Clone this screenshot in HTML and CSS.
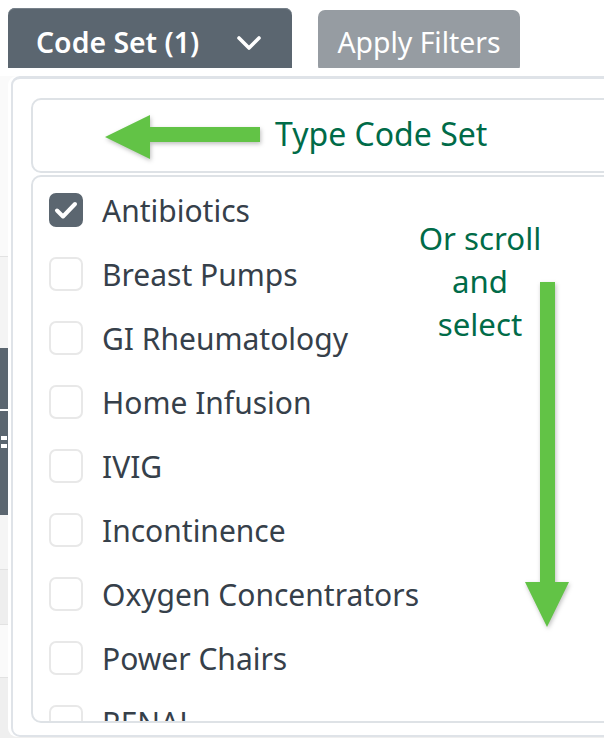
FILE: index.html
```html
<!DOCTYPE html>
<html>
<head>
<meta charset="utf-8">
<link rel="stylesheet" href="styles.css">
</head>
<body>
<div class="toolbar">
  <button class="btn btn-dark">Code Set (1)
    <svg class="chev" width="26" height="16" viewBox="0 0 26 16"><polyline points="3,3 13,13 23,3" fill="none" stroke="#fff" stroke-width="3.6" stroke-linecap="round" stroke-linejoin="round"/></svg>
  </button>
  <button class="btn btn-muted">Apply Filters</button>
</div>

<div class="table">
  <div class="trow r1"></div>
  <div class="trow r2"></div>
  <div class="trow r3"><span class="grip"></span></div>
  <div class="trow r4"></div>
  <div class="trow r5"></div>
  <div class="trow r6"></div>
  <div class="trow r7"></div>
</div>

<div class="menu">
  <div class="search">
    <svg class="left-arrow" width="162" height="52" viewBox="0 0 162 52"><polygon points="2,26 47,4 47,16 157,16 157,31 47,31 47,48" fill="#62c346"/></svg>
    <span class="hint">Type Code Set</span>
  </div>
  <div class="list">
    <label class="item"><span class="box checked"><svg width="34" height="34" viewBox="0 0 34 34"><polyline points="8,17.5 14,23.5 26,11" fill="none" stroke="#fff" stroke-width="4" stroke-linecap="round" stroke-linejoin="round"/></svg></span>Antibiotics</label>
    <label class="item"><span class="box"></span>Breast Pumps</label>
    <label class="item"><span class="box"></span>GI Rheumatology</label>
    <label class="item"><span class="box"></span>Home Infusion</label>
    <label class="item"><span class="box"></span>IVIG</label>
    <label class="item"><span class="box"></span>Incontinence</label>
    <label class="item"><span class="box"></span>Oxygen Concentrators</label>
    <label class="item"><span class="box"></span>Power Chairs</label>
    <label class="item"><span class="box"></span>RENAL</label>
  </div>
  <div class="scroll-note">Or scroll<br>and<br>select</div>
  <svg class="down-arrow" width="48" height="350" viewBox="0 0 48 350"><polygon points="17,2 32,2 32,302 46,302 24,347 2,302 17,302" fill="#62c346"/></svg>
</div>
</body>
</html>
```

FILE: styles.css
```css
html, body {
  margin: 0;
  padding: 0;
  overflow: hidden;
  background: #fff;
  width: 604px;
  height: 738px;
}
body {
  font-family: "Noto Sans", "Open Sans", sans-serif;
  position: relative;
}
.toolbar {
  display: flex;
  align-items: center;
  gap: 26px;
  padding: 8px 0 0 8px;
  height: 68px;
  box-sizing: border-box;
}
.btn {
  font-family: "Noto Sans", "Open Sans", sans-serif;
  color: #fff;
  border: none;
  border-radius: 7px;
  font-size: 28.4px;
  display: flex;
  align-items: center;
  padding: 0;
}
.btn-dark {
  background: #5b6670;
  height: 67px;
  width: 284px;
  padding-left: 28px;
  font-weight: 600;
  box-shadow: inset 0 1px 0 #77818a;
  align-self: flex-start;
}
.chev {
  margin-left: 37px;
  margin-top: 2px;
}
.btn-muted {
  background: #969ca2;
  height: 63px;
  width: 202px;
  justify-content: center;
  font-weight: 400;
  margin-top: 2px;
  align-self: flex-start;
}
.table {
  display: flex;
  flex-direction: column;
}
.trow { border-bottom: 1px solid #e2e2e2; }
.r1 { height: 188px; background: linear-gradient(#fff 0 8px, #fafafa 8px); }
.r2 { height: 91px; background: #f4f4f4; border-bottom: none; }
.r3 { height: 167px; background: #5b6670; border-bottom: none; position: relative;
  background-image: linear-gradient(#fff, #fff); background-size: 100% 2px; background-position: 0 61px; background-repeat: no-repeat; }
.grip { position: absolute; left: 1px; top: 88px; width: 6px; height: 12px;
  background: repeating-linear-gradient(#fff 0 4px, transparent 4px 8px); }
.r4 { height: 54px; background: #f5f5f5; }
.r5 { height: 54px; background: #eeeeee; }
.r6 { height: 52px; background: #fafafa; }
.r7 { height: 60px; background: #efefef; border-bottom: none; }

.menu {
  position: absolute;
  left: 11px;
  top: 76px;
  width: 660px;
  background: #fff;
  border: 2px solid #dfe3e8;
  border-top-width: 3px;
  border-radius: 9px;
  padding: 19px 0 12px 18px;
  box-shadow: -3px 0 0 #fff;
  display: flex;
  flex-direction: column;
  gap: 2px;
}
.search {
  height: 75px;
  box-sizing: border-box;
  border: 2px solid #dee2e6;
  border-radius: 10px;
  display: flex;
  align-items: center;
  padding-left: 70px;
}
.left-arrow {
  filter: drop-shadow(1px 2px 2px rgba(0,0,0,0.25));
  margin-top: 2px;
}
.hint {
  color: #006b48;
  font-size: 32px;
  margin-left: 10px;
  margin-top: -4px;
}
.list {
  height: 548px;
  box-sizing: border-box;
  border: 2px solid #dee2e6;
  border-radius: 10px;
  overflow: hidden;
  padding: 1px 0 0 16px;
}
.item {
  display: flex;
  align-items: center;
  height: 64px;
  color: #36404a;
  font-size: 30px;
}
.box {
  width: 34px;
  height: 34px;
  box-sizing: border-box;
  border: 2px solid #e8e8e8;
  border-radius: 7px;
  margin-right: 19px;
  flex: none;
  display: flex;
}
.box.checked {
  background: #5b6670;
  border-color: #5b6670;
}
.box.checked svg { margin: -2px; }
.scroll-note {
  position: absolute;
  left: 397px;
  top: 138px;
  width: 140px;
  text-align: center;
  color: #006b48;
  font-size: 31.2px;
  line-height: 43px;
}
.down-arrow {
  position: absolute;
  left: 510px;
  top: 201px;
  filter: drop-shadow(1px 2px 2px rgba(0,0,0,0.25));
}
```
